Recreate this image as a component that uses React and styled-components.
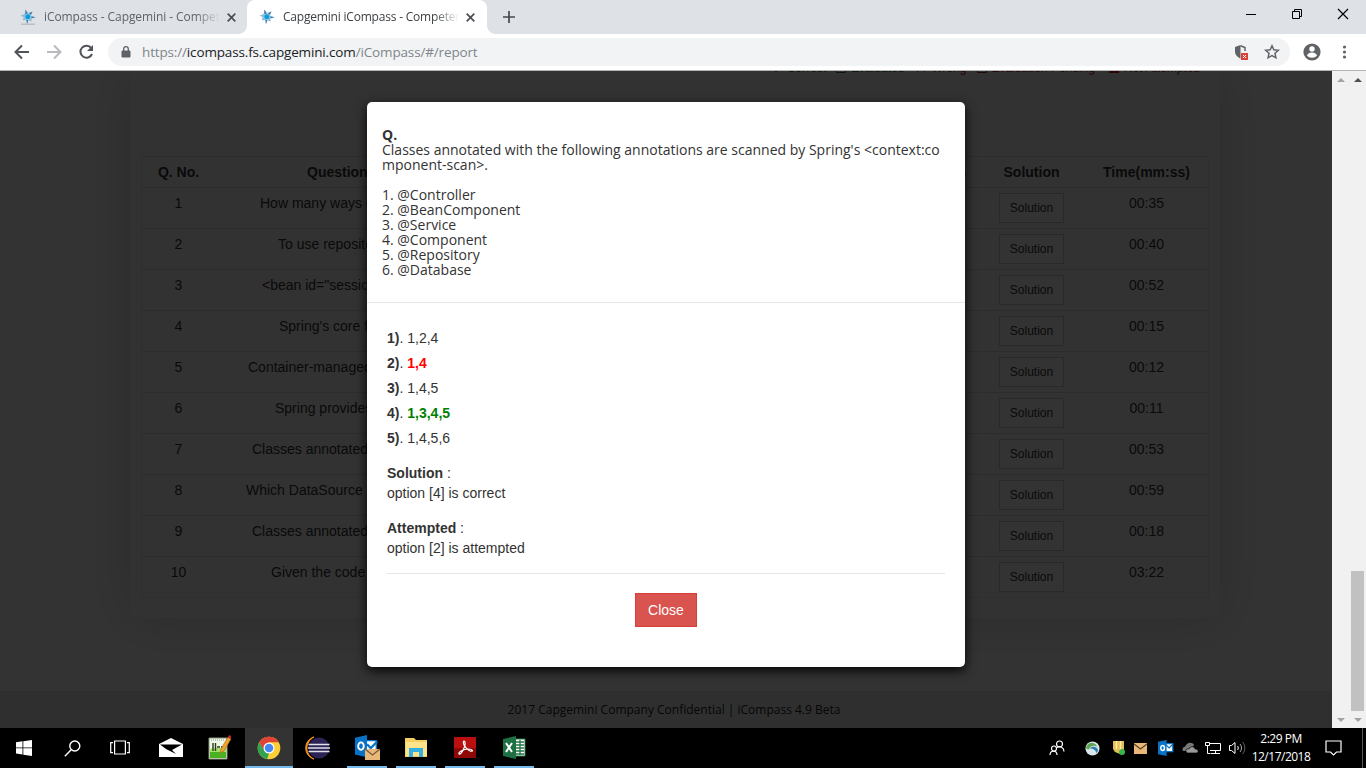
import React from "react";
import styled, { createGlobalStyle } from "styled-components";

const Global = createGlobalStyle`
  * { box-sizing: border-box; }
  html, body { margin: 0; padding: 0; overflow: hidden; background: #000; }
  svg { display: block; flex: none; }
`;
const arial = `"Liberation Sans", Arial, sans-serif`;

const Screen = styled.div`
  width: 1366px; height: 768px; display: flex; flex-direction: column;
  overflow: hidden; font-family: ${arial}; font-size: 14px;
`;

/* Browser chrome */
const TabStrip = styled.div`
  height: 34px; background: #dee1e6; display: flex; align-items: stretch; flex: none;
`;
const Tab = styled.div`
  width: ${p => p.$width}px; display: flex; align-items: center; position: relative;
  padding-left: ${p => p.$pad}px;
  background: ${p => (p.$active ? "#fff" : "transparent")};
  border-radius: 8px 8px 0 0; color: ${p => (p.$active ? "#3c4043" : "#5f6368")};
  &::before, &::after {
    content: ""; display: ${p => (p.$active ? "block" : "none")};
    position: absolute; bottom: 0; width: 8px; height: 8px;
  }
  &::before { left: -8px; background: radial-gradient(circle at 0 0, transparent 7.5px, #fff 8px); }
  &::after { right: -8px; background: radial-gradient(circle at 100% 0, transparent 7.5px, #fff 8px); }
`;
const TabTitle = styled.div`
  width: ${p => p.$width}px; margin: 0 7px 0 8px; overflow: hidden; white-space: nowrap;
  font: 12px/18px "Open Sans", sans-serif; letter-spacing: ${p => p.$track}px;
  mask-image: linear-gradient(90deg, #000 86%, transparent 100%);
`;
const NewTab = styled.div`
  width: 44px; display: flex; align-items: center; justify-content: center;
`;
const WindowButtons = styled.div`
  margin-left: auto; display: flex; align-items: flex-start; padding: 8px 17px 0 0; gap: 34px;
`;
const Toolbar = styled.div`
  height: 37px; background: #fff; border-bottom: 1px solid #b4b6b6; flex: none;
  display: flex; align-items: center; padding-left: 13px;
`;
const NavButtons = styled.div`
  display: flex; gap: 14px; width: 95px; flex: none; align-items: center;
`;
const AddressBar = styled.div`
  width: 1182px; height: 28px; border-radius: 14px; background: #f1f3f4; flex: none;
  display: flex; align-items: center; padding: 0 9px 0 13px; margin-right: 13px;
`;
const Url = styled.div`
  margin-left: 11px; flex: 1; font: 13.5px/20px "Open Sans", sans-serif; color: #80868b;
  letter-spacing: -0.15px; white-space: nowrap;
`;
const Host = styled.span`color: #202124;`;
const BarIcons = styled.div`display: flex; gap: 14px; align-items: center;`;

/* Page */
const Viewport = styled.div`
  height: 657px; flex: none; display: flex; background: #f1f1f1; overflow: hidden;
`;
const Page = styled.div`
  width: 1332px; height: 657px; position: relative; overflow: hidden; background: #fff;
  display: flex; flex-direction: column; align-items: center;
`;
const Panel = styled.div`
  width: 1090px; height: 547px; margin-right: -18px; padding: 0 11px;
  box-shadow: 0 0 50px rgba(0,0,0,.17); background: #fafafa; flex: none;
`;
const Legend = styled.div`
  height: 85px; display: flex; justify-content: flex-end; align-items: flex-start;
  padding-right: 9px; font-size: 12px; line-height: 14px;
`;
const LegendItem = styled.div`
  color: ${p => p.$color}; margin: -10px 0 0 ${p => p.$gap || 0}px; white-space: nowrap;
  display: flex; align-items: center; gap: 5px;
`;
const Table = styled.div`border: 1px solid #e9e9e9; border-top-color: #e0e0e0;`;
const Row = styled.div`
  height: ${p => (p.$head ? 30 : 41)}px; display: grid; padding-right: 6px;
  grid-template-columns: 73px 592px 165px 119px 1fr;
  font-weight: ${p => (p.$head ? "bold" : "normal")};
  border-top: ${p => (p.$head ? 0 : 1)}px solid #dcdcdc;
  color: #333; line-height: 20px; padding-top: 5px;
`;
const Cell = styled.div`
  text-align: ${p => p.$align || "center"}; padding-left: ${p => p.$indent || 0}px; white-space: nowrap;
`;
const StatusLabel = styled.span`padding-right: 6px;`;
const SolutionButton = styled.button`
  display: block; width: 65px; height: 30px; margin: 0 auto; padding: 0;
  background: #fff; border: 1px solid #ccc; color: #333; font: 12px/18px ${arial};
`;
const Footer = styled.div`
  margin-top: auto; width: 100%; height: 37px; background: #ebebeb; color: #222;
  font: 12px/37px "Open Sans", sans-serif; text-align: center; padding-left: 16px;
`;
const Overlay = styled.div`
  position: absolute; inset: 0; background: rgba(0,0,0,.8);
  display: flex; align-items: flex-start; justify-content: center; padding-top: 31px;
`;
const Modal = styled.div`
  width: 598px; height: 565px; background: #fff; border-radius: 5px; color: #333;
  box-shadow: 0 4px 12px rgba(0,0,0,.9);
`;
const Question = styled.div`
  height: 201px; padding: 25px 15px 0; border-bottom: 1px solid #e5e5e5;
  font: 14px/15px "Open Sans", sans-serif; white-space: pre;
`;
const Answers = styled.div`padding: 23px 20px 0;`;
const Option = styled.div`height: 25px; line-height: 25px;`;
const Choice = styled.span`
  color: ${p => p.$color || "inherit"}; font-weight: ${p => (p.$color ? "bold" : "normal")};
`;
const Note = styled.div`line-height: 20px; margin-top: ${p => p.$gap}px;`;
const Actions = styled.div`
  margin-top: 15px; border-top: 1px solid #e5e5e5; padding-top: 19px;
  display: flex; justify-content: center;
`;
const CloseButton = styled.button`
  width: 62px; height: 34px; background: #d9534f; border: 1px solid #d43f3a; color: #fff;
  font: 14px/20px ${arial}; padding: 0;
`;
const ScrollBar = styled.div`
  width: 17px; height: 657px; display: flex; flex-direction: column; align-items: center;
  padding: 7px 0 6px;
`;
const Thumb = styled.div`width: 13px; height: 140px; margin: auto 0 7px; background: #c1c1c1;`;
const Arrow = styled.div`
  width: 0; height: 0; border: 4px solid transparent; margin-top: ${p => (p.$auto ? "auto" : 0)};
  border-top-width: ${p => (p.$down ? 4 : 0)}px; border-bottom-width: ${p => (p.$down ? 0 : 4)}px;
  border-${p => (p.$down ? "top" : "bottom")}-color: ${p => p.$color};
`;

/* Taskbar */
const Taskbar = styled.div`height: 40px; background: #000; display: flex; flex: none;`;
const Task = styled.div`
  width: ${p => p.$width || 49}px; display: flex; align-items: center; justify-content: center;
  background: ${p => (p.$active ? "#333" : "transparent")};
`;
const Running = styled(Task)`
  margin-left: ${p => p.$gap || 0}px; border-bottom: 2px solid #76b9ed; padding-top: 2px;
`;
const Tray = styled.div`
  margin-left: auto; display: flex; align-items: center;
`;
const TrayIcon = styled.div`width: ${p => p.$w || 24}px; display: flex; justify-content: center;`;
const Clock = styled.div`
  width: 64px; color: #fff; text-align: center; font: 12px/18px "Open Sans", sans-serif;
  letter-spacing: -0.5px; padding-bottom: 1px; white-space: nowrap;
`;
const ActionCenter = styled.div`
  width: 50px; height: 40px; display: flex; align-items: center; padding-left: 12px;
  border-right: 1px solid #555; margin-right: 3px;
`;

const Compass = ({ base }) => (
  <svg width="16" height="18" viewBox="0 0 16 18">
    {base && <path d="M1 15.500h14v1.500H1z" fill="#b9bfc6" />}
    <path d="M5.500 1.500L8 5l4.500-1.500L11 7.700l4.500 1.500-4.200 1.300.4 3-3.300-1.300L7 16l-1.200-4-3 .3 1-3.300L.5 7.700 4.700 6z" fill="#8fb6d2" />
    <path d="M5.500 1.500l2 4-2 1zM12.500 3.500l-2 3.500-1.500-1.500zM15.500 9.200l-4 1V8.500zM7 16l-.3-4h1.600z" fill="#3f74a0" />
    <circle cx="7.800" cy="8.800" r="3" fill="#0a9bdc" stroke="#a9d5ea" strokeWidth=".8" />
  </svg>
);
const Cross = () => (
  <svg width="9" height="9" viewBox="0 0 9 9" stroke="#4b4f53" strokeWidth="1.7"><path d="M.7.7l7.600 7.600M8.300.7L.7 8.300" /></svg>
);
const OutlookMark = ({ size }) => (
  <svg width={size} height={size} viewBox="0 0 26 26">
    <path d="M12 6h12v13H12z" fill="#fff" stroke="#0875c8" strokeWidth="2" />
    <path d="M13 8l5 5 6-6" fill="none" stroke="#0875c8" strokeWidth="2" />
    <path d="M0 3L14 0v26L0 23z" fill="#0872c6" />
    <ellipse cx="7.500" cy="13" rx="3" ry="4" fill="none" stroke="#fff" strokeWidth="2.400" />
  </svg>
);

const rows = [
  [118, "How many ways can", "00:35"],
  [136, "To use repository", "00:40"],
  [120, "<bean id=\"sessionFactory\"", "00:52"],
  [137, "Spring's core framework", "00:15"],
  [106, "Container-managed", "00:12"],
  [133, "Spring provides", "00:11"],
  [110, "Classes annotated with", "00:53"],
  [104, "Which DataSource is", "00:59"],
  [110, "Classes annotated with", "00:18"],
  [129, "Given the code below", "03:22"],
];
const options = [["1,2,4"], ["1,4", "#ff0000"], ["1,4,5"], ["1,3,4,5", "#008000"], ["1,4,5,6"]];

function Chrome() {
  return (
    <>
      <TabStrip>
        <Tab $width={247} $pad={20}>
          <Compass base /><TabTitle $width={176} $track={-0.08}>iCompass - Capgemini - Competency</TabTitle><Cross />
        </Tab>
        <Tab $active $width={240} $pad={12}>
          <Compass /><TabTitle $width={176} $track={-0.2}>Capgemini iCompass - Competency</TabTitle><Cross />
        </Tab>
        <NewTab>
          <svg width="12" height="12" viewBox="0 0 12 12" stroke="#45494d" strokeWidth="1.7"><path d="M6 0v12M0 6h12" /></svg>
        </NewTab>
        <WindowButtons>
          <svg width="12" height="12" viewBox="0 0 12 12"><path d="M1 6h10v1H1z" fill="#000" /></svg>
          <svg width="12" height="12" viewBox="0 0 12 12" fill="none" stroke="#000"><path d="M1.500 3.500h7v7h-7zM3.500 3.500v-2h7v7h-2" /></svg>
          <svg width="12" height="12" viewBox="0 0 12 12" stroke="#000" strokeWidth="1.2"><path d="M1 1l10 10M11 1L1 11" /></svg>
        </WindowButtons>
      </TabStrip>
      <Toolbar>
        <NavButtons>
          <svg width="18" height="18" viewBox="0 0 18 18" fill="none" stroke="#505357" strokeWidth="2"><path d="M16 9H3M9 2.500L2.500 9 9 15.500" /></svg>
          <svg width="18" height="18" viewBox="0 0 18 18" fill="none" stroke="#b8babd" strokeWidth="2"><path d="M2 9h13M9 2.500L15.500 9 9 15.500" /></svg>
          <svg width="18" height="18" viewBox="0 0 18 18"><path d="M14.300 5.200A6 6 0 1 0 15 11" fill="none" stroke="#505357" strokeWidth="2" /><path d="M16 2v6h-6z" fill="#505357" /></svg>
        </NavButtons>
        <AddressBar>
          <svg width="10" height="12" viewBox="0 0 10 12"><path d="M1 5h8v6H1z" fill="#5f6368" stroke="#5f6368" /><path d="M2.700 5V3a2.300 2.300 0 0 1 4.600 0v2" fill="none" stroke="#5f6368" strokeWidth="1.300" /></svg>
          <Url>https://<Host>icompass.fs.capgemini.com</Host>/iCompass/#/report</Url>
          <BarIcons>
            <svg width="16" height="16" viewBox="0 0 16 16"><path d="M7.500 1L2 3v4.500c0 3 2 5.500 5.500 7z" fill="#5f6368" /><path d="M7.500 1.700l4.500 1.800V7" fill="none" stroke="#5f6368" strokeWidth="1.500" /><path d="M8 9h7v7H8z" fill="#db4437" /><path d="M10 11l3 3M13 11l-3 3" stroke="#fff" /></svg>
            <svg width="18" height="18" viewBox="0 0 18 18"><path d="M9 2.800l1.800 4 4.500.5-3.300 3 .9 4.500L9 12.500l-3.900 2.300.9-4.500-3.300-3 4.500-.5z" fill="none" stroke="#5f6368" strokeWidth="1.500" /></svg>
          </BarIcons>
        </AddressBar>
        <svg width="18" height="18" viewBox="0 0 18 18"><circle cx="9" cy="9" r="8.600" fill="#5f6368" /><circle cx="9" cy="6" r="2.700" fill="#fff" /><path d="M4 12.500c1-4 9-4 10 0-2.500 3-7.500 3-10 0z" fill="#fff" /></svg>
        <svg width="45" height="16" viewBox="0 0 45 16" fill="#5f6368"><circle cx="23.500" cy="3" r="1.600" /><circle cx="23.500" cy="8" r="1.600" /><circle cx="23.500" cy="13" r="1.600" /></svg>
      </Toolbar>
    </>
  );
}

const Mark = ({ d, fill, stroke }) => (
  <svg width="10" height="10" viewBox="0 0 10 10" fill={fill || "none"} stroke={stroke || "none"}><path d={d} /></svg>
);

function Report() {
  return (
    <Page>
      <Panel>
        <Legend>
          <LegendItem $color="#3c763d"><Mark d="M1 5l3 4 5-8" stroke="#3c763d" />Correct</LegendItem>
          <LegendItem $gap={10} $color="#3c763d"><Mark d="M.5.5h9v9h-9z" stroke="#3c763d" />Evaluated</LegendItem>
          <LegendItem $gap={12} $color="#a92420"><Mark d="M1 1l8 8M9 1L1 9" stroke="#a92420" />Wrong</LegendItem>
          <LegendItem $gap={10} $color="#a92420"><Mark d="M.5.5h9v9h-9z" stroke="#a92420" />Evaluation Pending</LegendItem>
          <LegendItem $gap={14} $color="#a92420"><Mark d="M0 0h10v10H0z" fill="#c02010" />Not Attempted</LegendItem>
        </Legend>
        <Table>
          <Row $head>
            <Cell>Q. No.</Cell><Cell $align="left" $indent={92}>Question</Cell>
            <Cell $align="right"><StatusLabel>Status</StatusLabel></Cell><Cell>Solution</Cell><Cell>Time(mm:ss)</Cell>
          </Row>
          {rows.map(([start, text, time], i) => (
            <Row key={i}>
              <Cell>{i + 1}</Cell><Cell $align="left" $indent={start - 73}>{text}</Cell><Cell />
              <Cell><SolutionButton>Solution</SolutionButton></Cell><Cell>{time}</Cell>
            </Row>
          ))}
        </Table>
      </Panel>
      <Footer>2017 Capgemini Company Confidential | iCompass 4.9 Beta</Footer>
      <Overlay>
        <Modal>
          <Question>
            <b>Q.</b>{`\nClasses annotated with the following annotations are scanned by Spring's <context:co\nmponent-scan>.\n\n1. @Controller\n2. @BeanComponent\n3. @Service\n4. @Component\n5. @Repository\n6. @Database`}
          </Question>
          <Answers>
            {options.map((o, i) => <Option key={i}><b>{i + 1})</b>. <Choice $color={o[1]}>{o[0]}</Choice></Option>)}
            <Note $gap={12}><b>Solution</b> :<br />option [4] is correct</Note>
            <Note $gap={15}><b>Attempted</b> :<br />option [2] is attempted</Note>
            <Actions><CloseButton>Close</CloseButton></Actions>
          </Answers>
        </Modal>
      </Overlay>
    </Page>
  );
}

function WindowsTaskbar() {
  return (
    <Taskbar>
      <Task $width={48}><svg width="16" height="16" viewBox="0 0 16 16" fill="#fff"><path d="M0 2.300L6.500 1.300v6.200H0zM7.300 1.200L16 0v7.500H7.300zM0 8.300h6.500v6.200L0 13.600zM7.300 8.300H16V16l-8.700-1.200z" /></svg></Task>
      <Task $width={48}><svg width="17" height="17" viewBox="0 0 17 17" fill="none" stroke="#fff" strokeWidth="1.400"><circle cx="10.800" cy="6" r="5" /><path d="M7.200 9.700L.8 16.200" /></svg></Task>
      <Task $width={48}><svg width="20" height="16" viewBox="0 0 20 16" fill="none" stroke="#fff" strokeWidth="1.200"><path d="M4.600 1h10.800v13H4.600zM3 2.600H.7v10H3M17 2.600h2.300v10H17" /></svg></Task>
      <Task $width={53}><svg width="24" height="20" viewBox="0 0 24 20"><path d="M0 6L12 0l12 6v13H0z" fill="#fff" /><path d="M1 6.500h22L13 12l4 4-10-5z" fill="#000" /></svg></Task>
      <Task $width={44}><svg width="24" height="26" viewBox="0 0 24 26"><path d="M2 3h18v21H2z" fill="#edf7e4" stroke="#879174" /><path d="M3 14c4-2 10 0 16-2v11H3z" fill="#a5e06a" /><path d="M3 17h16v6H3z" fill="#4bb022" /><path d="M4 5h14" stroke="#899" strokeDasharray="1 1" /><path d="M6 8v8M8.500 8v8M10 12h3M14 12h2" stroke="#263c1c" strokeWidth="1.400" /><path d="M13 18l1-4 7-12 3 2-7 12z" fill="#efa22d" stroke="#9d651a" strokeWidth=".6" /><path d="M21 2l1-2 2 1v3z" fill="#c32629" /></svg></Task>
      <Running $active $width={48} $gap={4}>
        <svg width="24" height="24" viewBox="0 0 24 24"><circle cx="12" cy="12" r="11.300" fill="#fbcf35" /><path d="M2.200 6.300A11.300 11.300 0 0 1 21.800 6.300H12L7 15z" fill="#e24235" /><path d="M2.200 6.300L7.500 15l5 1L10 23.200A11.300 11.300 0 0 1 2.200 6.300z" fill="#2fa34f" /><circle cx="12" cy="12" r="5.500" fill="#fff" /><circle cx="12" cy="12" r="4.300" fill="#4688f1" /></svg>
      </Running>
      <Task $width={49}><svg width="26" height="24" viewBox="0 0 26 24"><path d="M9 1C-2 4-2 20 9 23-1 18 0 6 9 1z" fill="#f7941e" stroke="#f7941e" strokeWidth="1" /><circle cx="14" cy="12" r="10.500" fill="#2d2355" /><path d="M3.500 8.500h21M3 12h22M3.500 15.500h21" stroke="#dfe1ec" strokeWidth="1.700" /></svg></Task>
      <Running $width={40} $gap={5}><svg width="26" height="26" viewBox="0 0 26 26"><g transform="scale(.93)"><path d="M12 6h12v12H12z" fill="#fff" stroke="#0875c8" strokeWidth="1.500" /><path d="M14 10l4 4 7-7" fill="none" stroke="#0875c8" strokeWidth="2.500" /><path d="M1 3L14 0v24L1 21z" fill="#0872c6" /><ellipse cx="7.500" cy="12" rx="3" ry="4" fill="none" stroke="#fff" strokeWidth="2" /></g><path d="M11 14h15v11H11z" fill="#e9b777" /><path d="M11 14l7.500 6L26 14" fill="none" stroke="#75583b" strokeWidth="1.200" /></svg></Running>
      <Running $width={40} $gap={9}><svg width="22" height="20" viewBox="0 0 22 20"><path d="M0 2V0h9l2 2h11v17H0z" fill="#f5cf62" /><path d="M1 4h21v14H1z" fill="#ffe48c" /><path d="M4 10h14v9h-4v-5H8v5H4z" fill="#35afe0" /></svg></Running>
      <Running $width={40} $gap={9}><svg width="22" height="22" viewBox="0 0 22 22"><path d="M0 0h22v21H0z" fill="#b90f0f" /><path d="M0 11h22v10H0z" fill="#8f0808" /><path d="M10 4c-2 1 1 8 6 10 4 1 3-2-2-2-4 0-10 3-9 5 2 1 7-8 6-12z" fill="none" stroke="#fff" strokeWidth="1.200" /></svg></Running>
      <Running $width={40} $gap={9}><svg width="24" height="24" viewBox="0 0 24 24"><path d="M12 3h11v17H12z" fill="#fff" stroke="#237447" /><path d="M14 6h8M14 9h8M14 12h8M14 15h8M14 18h8M18 4v15" stroke="#237447" strokeWidth="1.300" /><path d="M1 3l13-3v23L1 20z" fill="#1e7145" /><path d="M4 7l6 9M10 7l-6 9" stroke="#fff" strokeWidth="2" /></svg></Running>
      <Tray>
        <TrayIcon $w={34}><svg width="16" height="16" viewBox="0 0 16 16" fill="none" stroke="#fff" strokeWidth="1.200"><circle cx="10.500" cy="4" r="3" /><path d="M8 7.500c3-2 7 0 7 4" /><circle cx="5" cy="8.500" r="2.500" /><path d="M1 15c0-5 7-5 7 0" /></svg></TrayIcon>
        <TrayIcon $w={36}><svg width="15" height="15" viewBox="0 0 16 16"><circle cx="8" cy="8" r="7.500" fill="#dbe6ec" /><path d="M1 7c2-6 9-7 12-1-4-2-7-1-9 3-2 0-3-1-3-2z" fill="#5fa653" /><path d="M5 8c3-3 8-2 9 2l-2 3c0-3-3-5-7-5z" fill="#2a7fae" /></svg></TrayIcon>
        <TrayIcon $w={17}><svg width="14" height="16" viewBox="0 0 14 16"><path d="M1 1h11v9l-4 4-5-2-2-3z" fill="#e6bd56" /><path d="M4.500 1v8M8.500 1v9" stroke="#fff0ac" strokeWidth="1.500" /><circle cx="10" cy="12" r="3" fill="#36b94a" /></svg></TrayIcon>
        <TrayIcon $w={26}><svg width="13" height="11" viewBox="0 0 13 11"><path d="M0 0h13v11H0z" fill="#e9b777" /><path d="M0 1l6.500 5L13 1" fill="none" stroke="#55402b" strokeWidth="1.300" /></svg></TrayIcon>
        <TrayIcon $w={25}><OutlookMark size={16} /></TrayIcon>
        <TrayIcon $w={23}><svg width="16" height="12" viewBox="0 0 16 12"><path d="M1 9C-1 5 4 5 4 3c3-4 8-2 8 0L8 9z" fill="#777" /><path d="M5 11c-3-3 1-5 2-4 2-4 6-2 6 0 4 0 4 4 1 4z" fill="#999" stroke="#000" strokeWidth=".7" /></svg></TrayIcon>
        <TrayIcon $w={24}><svg width="16" height="16" viewBox="0 0 16 16" fill="none" stroke="#fff"><path d="M5 3.500h10.500v7H5M10.500 10.500v3M6 13.500h9M.5 2.500h4v3h-4zM2.500 5.500v8h3" /></svg></TrayIcon>
        <TrayIcon $w={24}><svg width="17" height="14" viewBox="0 0 17 14" fill="none" stroke="#fff"><path d="M.5 4.500h2L6 1.500v11l-3.500-3h-2z" /><path d="M8.500 5c1 1 1 3 0 4" /><path d="M11 3c2 2 2 6 0 8" stroke="#aaa" /><path d="M13.500 1c3 3 3 9 0 12" stroke="#666" /></svg></TrayIcon>
        <Clock>2:29 PM<br />12/17/2018</Clock>
        <ActionCenter><svg width="17" height="17" viewBox="0 0 17 17" fill="none" stroke="#fff" strokeWidth="1.200"><path d="M1 1h15v11h-4.500L8.500 15 5.500 12H1z" /></svg></ActionCenter>
      </Tray>
    </Taskbar>
  );
}

export default function App() {
  return (
    <Screen>
      <Global />
      <Chrome />
      <Viewport>
        <Report />
        <ScrollBar><Arrow $color="#a3a3a3" /><Arrow $down $auto $color="#a3a3a3" /></ScrollBar>
        <ScrollBar><Arrow $color="#505050" /><Thumb /><Arrow $down $color="#a3a3a3" /></ScrollBar>
      </Viewport>
      <WindowsTaskbar />
    </Screen>
  );
}
